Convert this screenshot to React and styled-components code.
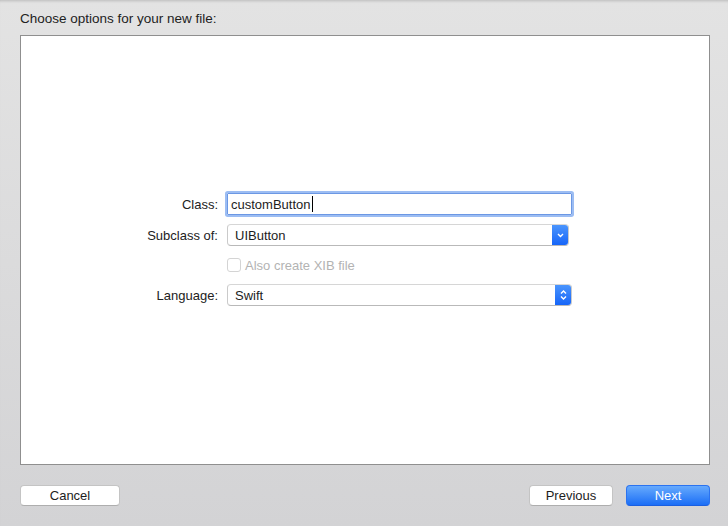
import React from 'react';
import styled, { createGlobalStyle } from 'styled-components';

const Global = createGlobalStyle`
  html, body { margin:0; padding:0; }
  body {
    font-family: "Liberation Sans", Arial, sans-serif;
    font-size:13px;
    color:#1d1d1d;
  }
`

const Sheet = styled.div`
  width:728px;
  height:526px;
  box-sizing:border-box;
  display:flex;
  flex-direction:column;
  padding:0 18px 0 20px;
  background:linear-gradient(#e3e3e3, #d3d3d5);
  box-shadow: inset 0 3px 3px -2px rgba(0,0,0,0.18);
`

const Title = styled.div`
  height:35px;
  line-height:37px;
  font-size:13.5px;
  color:#222;
`

const Panel = styled.div`
  height:430px;
  box-sizing:border-box;
  background:#fff;
  border:1px solid #8f8f8f;
  display:flex;
  align-items:center;
`

const Form = styled.div`
  display:grid;
  grid-template-columns:197px 346px;
  grid-template-rows:24px 24px 22px 24px;
  column-gap:8px;
  row-gap:7px;
  margin-top:-1px;
`

const Label = styled.div`
  text-align:right;
  align-self:center;
  color:#222;
`

const TextField = styled.div`
  height:22px;
  box-sizing:border-box;
  margin:1px 0 1px 1px;
  border:1px solid #6c98e4;
  border-radius:1px;
  box-shadow:0 0 0 2px #9cbdf3;
  padding:0 3px;
  display:flex;
  align-items:center;
  font-size:13px;
`

const Caret = styled.span`
  display:inline-block;
  width:1px;
  height:16px;
  background:#000;
  margin-left:1px;
`

const Popup = styled.div`
  height:22px;
  width:${({w}) => w}px;
  box-sizing:border-box;
  margin-top:1px;
  margin-left:1px;
  display:flex;
  border:1px solid #cacaca;
  border-top-color:#d6d6d6;
  border-bottom-color:#b9b9b9;
  border-radius:4px;
  background:#fff;
  overflow:hidden;
`

const PopupText = styled.div`
  flex:1;
  padding-left:7px;
  display:flex;
  align-items:center;
`

const Arrow = styled.div`
  width:17px;
  margin:-1px -1px -1px 0;
  background:linear-gradient(#4d97fd, #1463f8);
  display:flex;
  align-items:center;
  justify-content:center;
`

const CheckRow = styled.div`
  grid-column:2;
  display:flex;
  align-items:center;
  gap:4px;
  padding-left:1px;
  color:#b3b3b3;
`

const Box = styled.span`
  width:12px;
  height:12px;
  border:1px solid #d4d4d4;
  border-radius:3px;
  background:#fff;
`

const Footer = styled.div`
  flex:1;
  display:flex;
  align-items:center;
  gap:13px;
`

const Spacer = styled.div`
  flex:1;
`

const Button = styled.button`
  width:${({w}) => w}px;
  height:21px;
  box-sizing:border-box;
  font-family:inherit;
  font-size:13px;
  padding:0;
  border-radius:4px;
  border:1px solid ${({primary}) => primary ? '#2b73f0' : '#c4c4c4'};
  border-bottom-color:${({primary}) => primary ? '#1a5fe0' : '#aeaeae'};
  background:${({primary}) => primary ? 'linear-gradient(#66aafd, #1b6ef6)' : '#fff'};
  color:${({primary}) => primary ? '#fff' : '#1d1d1d'};
`

function Chevron({ double }) {
  return (
    <svg width="9" height="12" viewBox="0 0 9 12">
      {double && <path d="M2 4.5 L4.5 2 L7 4.5" fill="none" stroke="#fff" strokeWidth="1.4" />}
      <path d={double ? "M2 7.5 L4.5 10 L7 7.5" : "M2 5 L4.5 7.5 L7 5"} fill="none" stroke="#fff" strokeWidth="1.4" />
    </svg>
  )
}

export default function App() {
  return (
    <Sheet>
      <Global />
      <Title>Choose options for your new file:</Title>
      <Panel>
        <Form>
          <Label>Class:</Label>
          <TextField>customButton<Caret /></TextField>

          <Label>Subclass of:</Label>
          <Popup w={342}>
            <PopupText>UIButton</PopupText>
            <Arrow><Chevron /></Arrow>
          </Popup>

          <CheckRow><Box />Also create XIB file</CheckRow>

          <Label>Language:</Label>
          <Popup w={345}>
            <PopupText>Swift</PopupText>
            <Arrow><Chevron double /></Arrow>
          </Popup>
        </Form>
      </Panel>
      <Footer>
        <Button w={100}>Cancel</Button>
        <Spacer />
        <Button w={84}>Previous</Button>
        <Button primary w={84}>Next</Button>
      </Footer>
    </Sheet>
  )
}
